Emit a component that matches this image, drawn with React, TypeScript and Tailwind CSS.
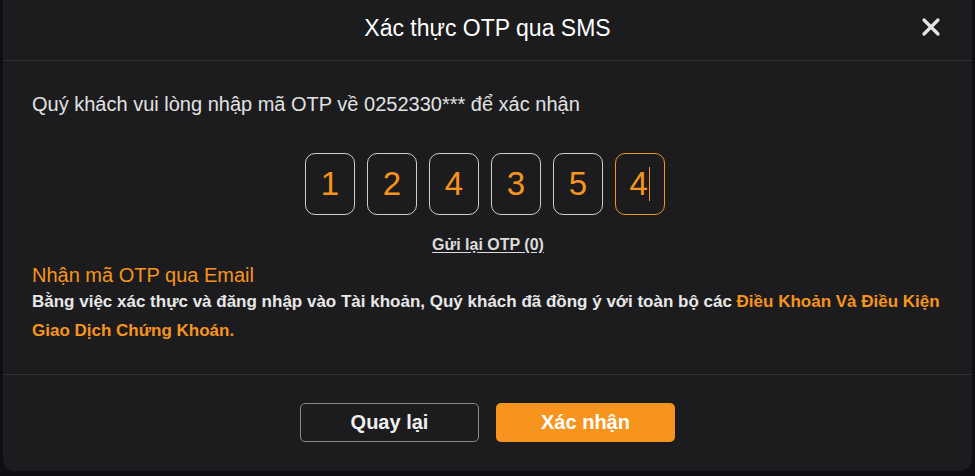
import { useState } from 'react'

const digits = ['1', '2', '4', '3', '5', '4']

export default function App() {
  const [code] = useState(digits)

  return (
    <div
      className="flex h-[476px] w-[975px] bg-[#0e0f12] px-[3px]"
      style={{ fontFamily: '"Liberation Sans", Arial, sans-serif' }}
    >
      <div className="flex h-[471px] w-full flex-col rounded-b-[12px] bg-[#1c1c1e]">
        {/* ── Header ────────────────────────────────────── */}
        <div className="relative flex h-[61px] shrink-0 items-center justify-center border-b border-[#333336] pb-[4px]">
          <h1 className="text-[23px] text-white">Xác thực OTP qua SMS</h1>
          <button className="absolute right-[30px] top-[16px] flex h-[22px] w-[22px] items-center justify-center text-[#e6e6e6]">
            <svg viewBox="0 0 20 20" className="h-[20px] w-[20px]">
              <path d="M3 3 L17 17 M17 3 L3 17" stroke="currentColor" strokeWidth="3.2" strokeLinecap="round" />
            </svg>
          </button>
        </div>

        {/* ── Body ──────────────────────────────────────── */}
        <div className="flex h-[314px] shrink-0 flex-col border-b border-[#333336] pl-[29px] pr-[12px] pt-[31px]">
          <p className="text-[20px] leading-[24px] text-[#e2e2e2]">
            Quý khách vui lòng nhập mã OTP về 0252330*** để xác nhận
          </p>

          <div className="mt-[37px] flex justify-center gap-[12px] pr-[22px]">
            {code.map((d, i) => {
              const active = i === code.length - 1
              return (
                <div
                  key={i}
                  className={
                    active
                      ? 'flex h-[62px] w-[50px] items-center justify-center rounded-[10px] border-[1.5px] border-[#f7941d] text-[33px] text-[#f7941d]'
                      : 'flex h-[62px] w-[50px] items-center justify-center rounded-[10px] border-[1.5px] border-[#cfcfcf] text-[33px] text-[#f7941d]'
                  }
                >
                  {d}
                  {active && <span className="ml-[1px] h-[34px] w-[1.5px] bg-[#f7941d]" />}
                </div>
              )
            })}
          </div>

          <div className="mt-[20px] flex justify-center pr-[16px]">
            <a className="text-[16px] font-semibold leading-[20px] text-[#dcdcdc] underline underline-offset-2">
              Gửi lại OTP (0)
            </a>
          </div>

          <a className="mt-[8px] text-[20px] leading-[24px] text-[#f7941d]">Nhận mã OTP qua Email</a>
          <p className="text-[17px] font-bold leading-[29px] text-[#e8e8e8]">
            Bằng việc xác thực và đăng nhập vào Tài khoản, Quý khách đã đồng ý với toàn bộ các{' '}
            <span className="text-[#f7941d]">Điều Khoản Và Điều Kiện Giao Dịch Chứng Khoán.</span>
          </p>
        </div>

        {/* ── Footer ────────────────────────────────────── */}
        <div className="flex flex-1 items-center justify-center gap-[17px] pb-[2px]">
          <button className="h-[39px] w-[179px] rounded-[5px] border-[1.5px] border-[#8a8a8a] text-[20px] font-bold text-[#f0f0f0]">
            Quay lại
          </button>
          <button className="h-[39px] w-[179px] rounded-[5px] bg-[#f7941d] text-[20px] font-bold text-white">
            Xác nhận
          </button>
        </div>
      </div>
    </div>
  )
}
